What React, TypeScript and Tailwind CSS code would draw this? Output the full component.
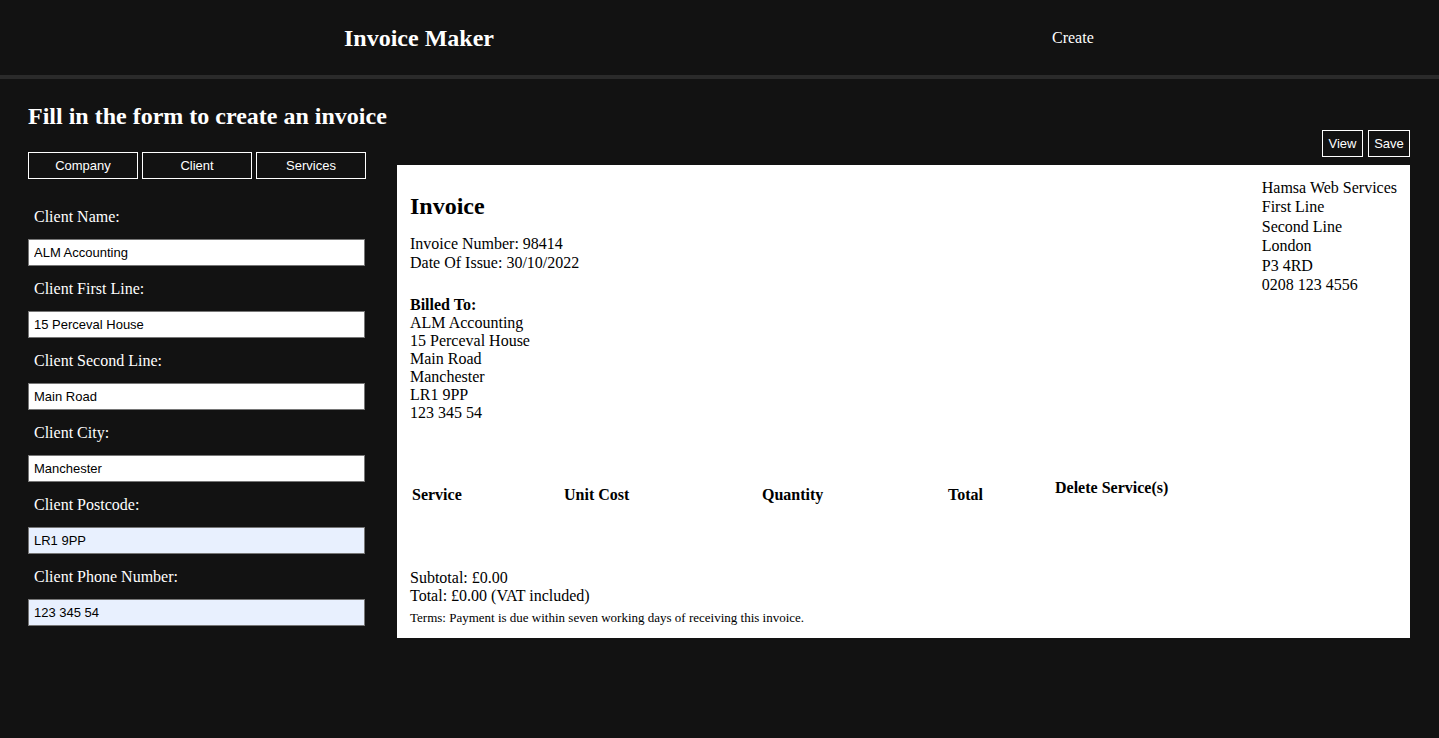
import { useState } from 'react';

const serif = "font-['Liberation_Serif',_'Times_New_Roman',_serif]";
const sans = "font-['Liberation_Sans',_Arial,_sans-serif]";

const fields = [
  { label: 'Client Name:', value: 'ALM Accounting', autofill: false },
  { label: 'Client First Line:', value: '15 Perceval House', autofill: false },
  { label: 'Client Second Line:', value: 'Main Road', autofill: false },
  { label: 'Client City:', value: 'Manchester', autofill: false },
  { label: 'Client Postcode:', value: 'LR1 9PP', autofill: true },
  { label: 'Client Phone Number:', value: '123 345 54', autofill: true },
];

const company = ['Hamsa Web Services', 'First Line', 'Second Line', 'London', 'P3 4RD', '0208 123 4556'];

const App = () => {
  const [tab, setTab] = useState('Client');

  return (
    <div className={`min-h-screen bg-[#121212] text-white ${serif}`}>
      {/* Top bar */}
      <header className="h-[79px] flex items-center border-b-4 border-[#2a2a2a]">
        <div className="w-[1052px] pl-[344px]">
          <h1 className="text-[24px] font-bold leading-[28px]">Invoice Maker</h1>
        </div>
        <a className="text-[16px] cursor-pointer">Create</a>
      </header>

      <main className="flex px-[28px]">
        {/* Left side - form */}
        <div className="w-[337px] pt-[23px]">
          <h2 className="text-[24px] font-bold leading-[28px] whitespace-nowrap">Fill in the form to create an invoice</h2>

          <div className={`mt-[22px] flex gap-[4px] w-[338px] ${sans}`}>
            {['Company', 'Client', 'Services'].map((t) => (
              <button
                key={t}
                onClick={() => setTab(t)}
                className="w-[110px] h-[27px] border border-white text-[13px] text-white bg-transparent"
              >
                {t}
              </button>
            ))}
          </div>

          <div className="mt-[15px]">
            {fields.map((f) => (
              <div key={f.label}>
                <label className="h-[45px] flex items-center pl-[6px] text-[16px]">{f.label}</label>
                <input
                  readOnly
                  value={f.value}
                  className={`w-[337px] h-[27px] border border-[#767676] px-[5px] text-[13px] text-black ${sans} ${
                    f.autofill ? 'bg-[#e8f0fe]' : 'bg-white'
                  }`}
                />
              </div>
            ))}
          </div>
        </div>

        {/* Right side - invoice preview */}
        <div className="ml-[32px] w-[1013px] pt-[51px]">
          <div className={`flex justify-end gap-[5px] ${sans}`}>
            <button className="w-[41px] h-[27px] border border-white text-[13px] text-white">View</button>
            <button className="w-[42px] h-[27px] border border-white text-[13px] text-white">Save</button>
          </div>

          <div className="mt-[8px] h-[473px] bg-white text-black px-[13px]">
            <div className="flex justify-between">
              <div className="pt-[27px]">
                <h2 className="text-[24px] font-bold leading-[28px]">Invoice</h2>
                <div className="mt-[14px] text-[16px] leading-[19px]">
                  <p>Invoice Number: 98414</p>
                  <p>Date Of Issue: 30/10/2022</p>
                </div>
                <div className="mt-[24px] text-[16px] leading-[18px]">
                  <p className="font-bold">Billed To:</p>
                  <p>ALM Accounting</p>
                  <p>15 Perceval House</p>
                  <p>Main Road</p>
                  <p>Manchester</p>
                  <p>LR1 9PP</p>
                  <p>123 345 54</p>
                </div>
              </div>
              <div className="pt-[13px] text-[16px] leading-[19.4px]">
                {company.map((line) => (
                  <p key={line}>{line}</p>
                ))}
              </div>
            </div>

            {/* Services table header */}
            <div className="mt-[57px] flex items-start pl-[2px] text-[16px] leading-[18px] font-bold">
              <div className="w-[152px] mt-[7px]">Service</div>
              <div className="w-[198px] mt-[7px]">Unit Cost</div>
              <div className="w-[186px] mt-[7px]">Quantity</div>
              <div className="w-[107px] mt-[7px]">Total</div>
              <div>Delete Service(s)</div>
            </div>

            <div className="mt-[65px] text-[16px] leading-[18px]">
              <p>Subtotal: £0.00</p>
              <p>Total: £0.00 (VAT included)</p>
            </div>
            <p className="mt-[5px] text-[13px] leading-[15px]">
              Terms: Payment is due within seven working days of receiving this invoice.
            </p>
          </div>
        </div>
      </main>
    </div>
  );
};

export default App;
